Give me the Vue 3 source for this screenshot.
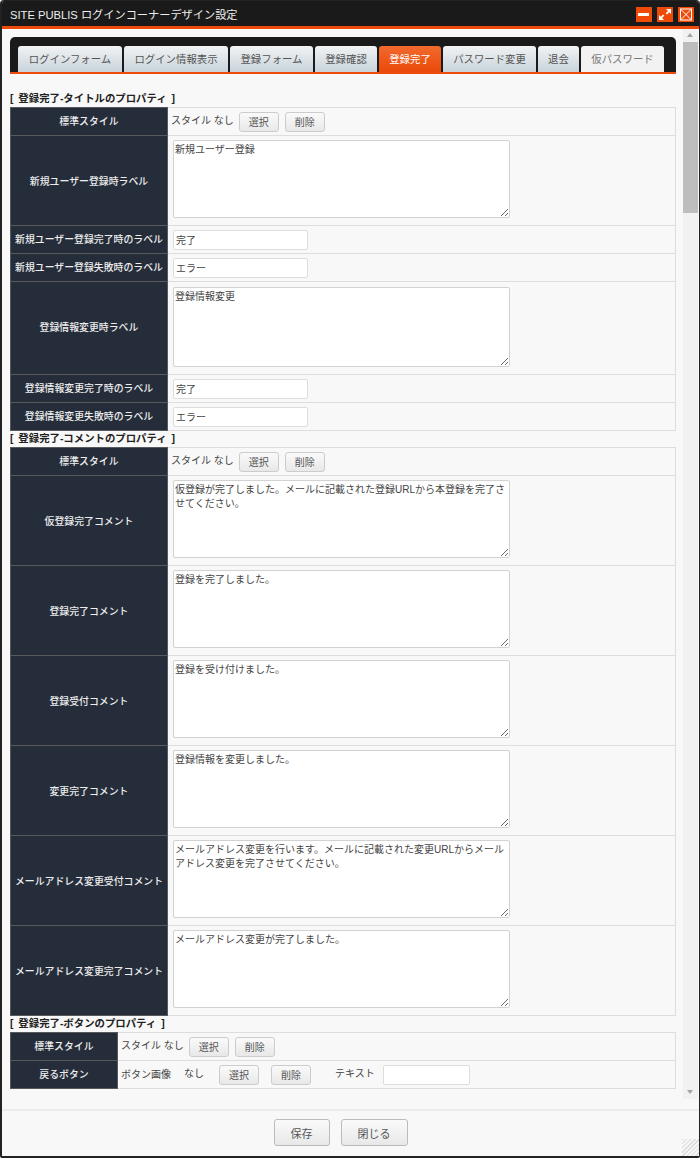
<script setup>
const tabs = [
  { t: 'ログインフォーム', w: 104 },
  { t: 'ログイン情報表示', w: 104 },
  { t: '登録フォーム', w: 83 },
  { t: '登録確認', w: 62 },
  { t: '登録完了', w: 62, active: true },
  { t: 'パスワード変更', w: 93 },
  { t: '退会', w: 41 },
  { t: '仮パスワード', w: 83, last: true }
]
const titleRows = [
  { k: '新規ユーザー登録時ラベル', area: '新規ユーザー登録' },
  { k: '新規ユーザー登録完了時のラベル', input: '完了' },
  { k: '新規ユーザー登録失敗時のラベル', input: 'エラー' },
  { k: '登録情報変更時ラベル', area: '登録情報変更', tall: true },
  { k: '登録情報変更完了時のラベル', input: '完了' },
  { k: '登録情報変更失敗時のラベル', input: 'エラー' }
]
const commentRows = [
  { k: '仮登録完了コメント', area: '仮登録が完了しました。メールに記載された登録URLから本登録を完了させてください。' },
  { k: '登録完了コメント', area: '登録を完了しました。' },
  { k: '登録受付コメント', area: '登録を受け付けました。' },
  { k: '変更完了コメント', area: '登録情報を変更しました。' },
  { k: 'メールアドレス変更受付コメント', area: 'メールアドレス変更を行います。メールに記載された変更URLからメールアドレス変更を完了させてください。' },
  { k: 'メールアドレス変更完了コメント', area: 'メールアドレス変更が完了しました。' }
]
</script>

<template>
  <div class="win">
    <header class="head">
      <span class="title">SITE PUBLIS ログインコーナーデザイン設定</span>
      <div class="ctrls">
        <span class="ctrl">
          <svg width="16" height="15" viewBox="0 0 16 15"><rect x="2" y="6" width="11" height="3" fill="#fff" /></svg>
        </span>
        <span class="ctrl">
          <svg width="16" height="15" viewBox="0 0 16 15"><path d="M9 2h5v5l-1.700-1.700-2.300 2.300-1.300-1.300 2.300-2.300zM7 13H2V8l1.700 1.700 2.300-2.300 1.300 1.300-2.300 2.300z" fill="#fff" /></svg>
        </span>
        <span class="ctrl">
          <svg width="16" height="15" viewBox="0 0 16 15"><rect x="2.500" y="2" width="11" height="11" fill="none" stroke="#fff" /><path d="M3 2.500l10 10M13 2.500l-10 10" stroke="#fff" fill="none" /></svg>
        </span>
      </div>
    </header>

    <div class="body">
      <main class="main">
        <nav class="tabbar">
          <span
            v-for="tab in tabs"
            :key="tab.t"
            class="tab"
            :class="{ active: tab.active, last: tab.last }"
            :style="{ width: tab.w + 'px' }"
          >{{ tab.t }}</span>
        </nav>

        <h3 class="sec first">[ 登録完了-タイトルのプロパティ ]</h3>
        <table class="grid">
          <tr class="r28">
            <th>標準スタイル</th>
            <td class="style-cell"><span>スタイル なし</span><button class="btn">選択</button><button class="btn">削除</button></td>
          </tr>
          <tr v-for="r in titleRows" :key="r.k" :class="r.tall ? 'r93' : r.area ? 'r90' : 'r28'">
            <th>{{ r.k }}</th>
            <td>
              <textarea v-if="r.area" class="area" :class="{ tall: r.tall }" :value="r.area"></textarea>
              <input v-else class="inp" :value="r.input" />
            </td>
          </tr>
        </table>

        <h3 class="sec">[ 登録完了-コメントのプロパティ ]</h3>
        <table class="grid">
          <tr class="r28">
            <th>標準スタイル</th>
            <td class="style-cell"><span>スタイル なし</span><button class="btn">選択</button><button class="btn">削除</button></td>
          </tr>
          <tr v-for="r in commentRows" :key="r.k" class="r90">
            <th>{{ r.k }}</th>
            <td><textarea class="area" :value="r.area"></textarea></td>
          </tr>
        </table>

        <h3 class="sec">[ 登録完了-ボタンのプロパティ ]</h3>
        <table class="grid narrow">
          <tr class="r28">
            <th>標準スタイル</th>
            <td class="style-cell"><span>スタイル なし</span><button class="btn">選択</button><button class="btn">削除</button></td>
          </tr>
          <tr class="r28">
            <th>戻るボタン</th>
            <td class="back-cell">
              <span>ボタン画像</span><span class="none">なし</span>
              <button class="btn">選択</button><button class="btn gap">削除</button>
              <span class="txt-label">テキスト</span><input class="inp small" />
            </td>
          </tr>
        </table>
      </main>

      <aside class="scroll">
        <span class="arrow up"></span>
        <span class="thumb"></span>
        <span class="rest"></span>
        <span class="arrow down"></span>
      </aside>
    </div>

    <footer class="foot">
      <button class="btn big">保存</button>
      <button class="btn big wide">閉じる</button>
    </footer>
    <span class="grip"></span>
  </div>
</template>

<style>
html, body { margin: 0; background: #fff; }
</style>

<style scoped>
.win {
  position: relative;
  box-sizing: border-box;
  width: 700px;
  height: 1158px;
  display: flex;
  flex-direction: column;
  overflow: hidden;
  background: #f8f8f8;
  border: 1px solid #222;
  border-width: 1px 1px 2px 2px;
  border-radius: 4px 4px 2px 2px;
  font-family: "Liberation Sans", "Noto Sans CJK JP", sans-serif;
  font-size: 10px;
  color: #444;
}
.head {
  height: 23px;
  flex: none;
  display: flex;
  align-items: center;
  justify-content: space-between;
  padding: 2px 5px 0 8px;
  background: #1a1a1a;
  border-bottom: 3px solid #ee4a0a;
}
.title { color: #eee; font-size: 11.2px; margin-top: -2px; }
.ctrls { display: flex; gap: 5px; }
.ctrl { width: 16px; height: 15px; background: #ee4a08; display: block; }
.ctrl svg { display: block; }
.body { flex: 1; display: flex; min-height: 0; }
.main { flex: 1; min-width: 0; padding: 8px 8px 0 8px; }
.tabbar {
  box-sizing: border-box;
  width: 666px;
  height: 37px;
  display: flex;
  align-items: flex-end;
  gap: 2px;
  padding-left: 8px;
  background: #1a1a1a;
  border-bottom: 2px solid #ee4a0a;
  border-radius: 5px 5px 0 0;
}
.tab {
  box-sizing: border-box;
  height: 26px;
  line-height: 27px;
  text-align: center;
  font-size: 10.4px;
  color: #555;
  background: linear-gradient(#f1f3f4, #c8d3da);
  border-radius: 3px 3px 0 0;
}
.tab.active { color: #fff; background: linear-gradient(#f26a2e, #ea4a08); }
.tab.last { background: #f2f2f2; color: #777; }
.sec {
  margin: 0;
  height: 16px;
  line-height: 16px;
  font-size: 10.4px;
  word-spacing: 2px;
  font-weight: 700;
  color: #222;
}
.sec.first { margin-top: 17px; }
.grid {
  width: 666px;
  border-collapse: collapse;
  table-layout: fixed;
  background: #f8f8f8;
}
.grid th {
  width: 157px;
  padding: 0;
  text-align: center;
  font-size: 9.9px;
  font-weight: 500;
  color: #eee;
  background: #252d3a;
  border: 1px solid #58595c;
}
.grid td {
  padding: 0 0 0 5px;
  border: 1px solid #ddd;
  vertical-align: middle;
}
.grid.narrow th { width: 107px; }
.grid.narrow td { padding-left: 3px; }
.r28 th, .r28 td { height: 28px; box-sizing: border-box; }
.r28 th { padding-bottom: 1px; }
.r90 th, .r90 td { height: 90px; box-sizing: border-box; }
.r93 th, .r93 td { height: 93px; box-sizing: border-box; }
.r93 th { padding-bottom: 3px; }
.r90 td { vertical-align: top; padding-top: 4px; }
.r93 td { vertical-align: top; padding-top: 5px; }
.style-cell { white-space: nowrap; }
.grid .style-cell { padding-left: 3px; }
.style-cell span { margin-right: 5px; }
.style-cell .btn + .btn { margin-left: 6px; }
.btn {
  box-sizing: border-box;
  width: 40px;
  height: 20px;
  padding: 0;
  font-family: inherit;
  font-size: 10px;
  color: #555;
  background: linear-gradient(#fafafa, #e8e8e8);
  border: 1px solid #ccc;
  border-radius: 3px;
  vertical-align: middle;
}
.back-cell { white-space: nowrap; }
.none { margin: 0 15px 0 13px; }
.back-cell .btn + .btn { margin-left: 12px; }
.txt-label { margin: 0 8px 0 24px; }
.area {
  display: block;
  box-sizing: border-box;
  width: 337px;
  height: 78px;
  padding: 2px 2px 2px 1px;
  font-family: inherit;
  font-size: 10px;
  line-height: 14px;
  color: #444;
  background: #fff;
  border: 1px solid #d2d2d2;
  border-radius: 2px;
  outline: none;
}
.area.tall { height: 80px; }
.inp {
  box-sizing: border-box;
  width: 135px;
  height: 20px;
  padding: 0 2px;
  font-family: inherit;
  font-size: 10px;
  color: #444;
  background: #fff;
  border: 1px solid #ddd;
  border-radius: 2px;
  vertical-align: middle;
}
.inp.small { width: 87px; }
.scroll {
  flex: none;
  width: 15px;
  margin-right: 1px;
  height: 1070px;
  display: flex;
  flex-direction: column;
  background: #f1f1f1;
}
.arrow { flex: none; height: 13px; position: relative; }
.arrow::after {
  content: '';
  position: absolute;
  left: 4px;
  top: 4px;
  border: 3px solid transparent;
}
.arrow.up::after { border-bottom: 4px solid #a3a3a3; border-top: 0; }
.arrow.down::after { border-top: 4px solid #a3a3a3; border-bottom: 0; }
.thumb { flex: none; height: 171px; background: #bdbdbd; }
.rest { flex: 1; }
.foot {
  box-sizing: border-box;
  flex: none;
  height: 47px;
  margin-top: 9px;
  display: flex;
  justify-content: center;
  align-items: flex-start;
  gap: 11px;
  padding: 8px 20px 0 0;
  border-top: 2px solid #ececec;
}
.btn.big {
  width: 56px;
  height: 27px;
  font-size: 11px;
  border-color: #bbb;
}
.btn.big.wide { width: 67px; }
.grip {
  position: absolute;
  right: 0;
  bottom: 0;
  width: 17px;
  height: 17px;
  background: repeating-linear-gradient(135deg, #ddd 0 1px, #f4f4f4 1px 3px);
}
</style>
